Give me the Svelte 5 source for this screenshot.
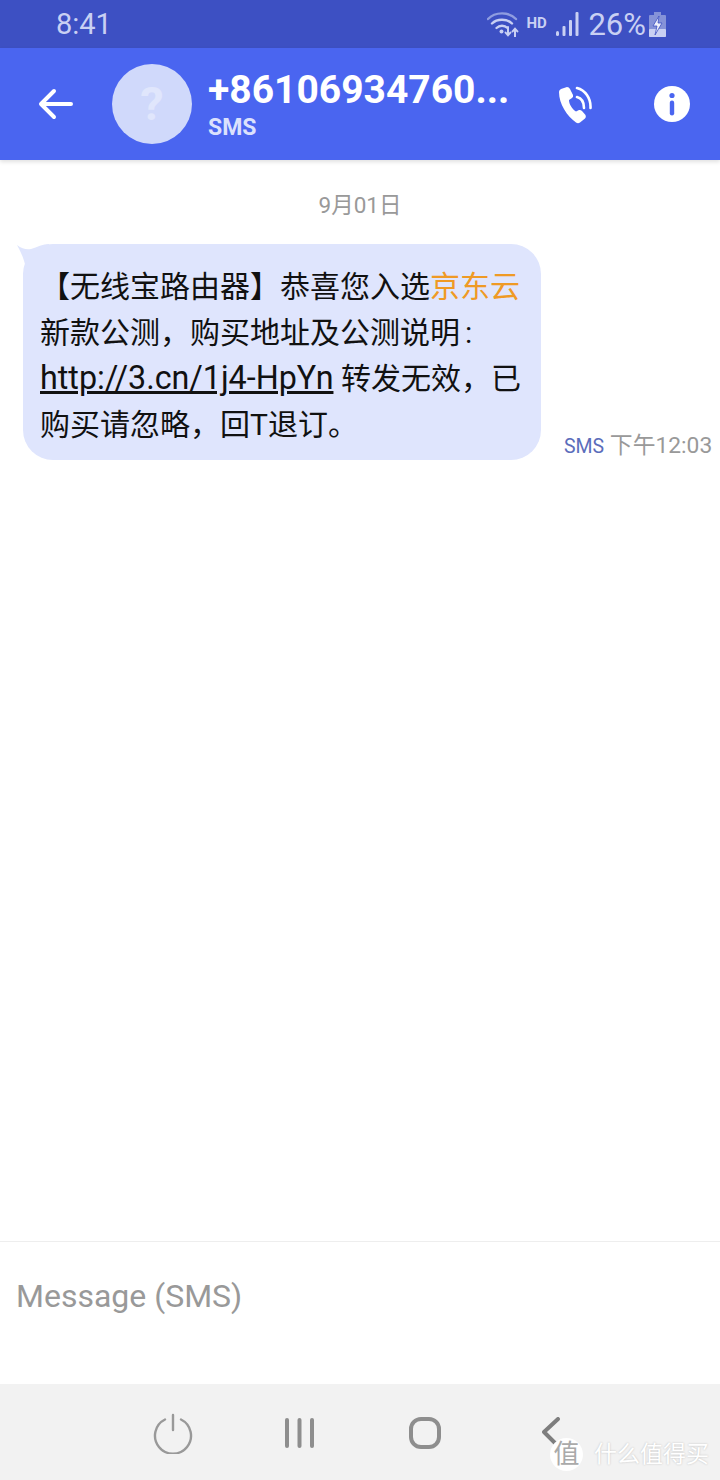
<script lang="ts">
  const words = "什么值得买";
</script>

<div class="phone">
  <div class="status">
    <span class="clock">8:41</span>
    <div class="status-right">
      <svg class="wifi" width="33" height="26" viewBox="0 0 33 26" fill="none" stroke-linecap="round">
        <path d="M1 8 C8 0.5 22 0.5 29 8" stroke="#8f9de0" stroke-width="2.4" />
        <path d="M5 12.5 C10 7.5 20 7.5 25 12.5" stroke="#c9d0f3" stroke-width="2.4" />
        <path d="M9.5 17 C12.5 14 17.5 14 20.5 17" stroke="#c9d0f3" stroke-width="2.4" />
        <circle cx="14.5" cy="20.5" r="2" fill="#c9d0f3" />
        <path d="M21 16 V24 M18.6 21.6 L21 24.2 L23.4 21.6" stroke="#c9d0f3" stroke-width="2" />
        <path d="M28 26 V18 M25.6 20.4 L28 17.8 L30.4 20.4" stroke="#c9d0f3" stroke-width="2" />
      </svg>
      <span class="hd">HD</span>
      <svg class="signal" width="23" height="24" viewBox="0 0 23 24" fill="#c9d0f3">
        <rect x="0" y="19" width="3" height="5" rx="1.5" />
        <rect x="6.5" y="14" width="3" height="10" rx="1" />
        <rect x="13" y="8" width="3" height="16" rx="1" />
        <rect x="19.5" y="0" width="3" height="24" rx="1" />
      </svg>
      <span class="pct">26%</span>
      <svg class="battery" width="17" height="25" viewBox="0 0 17 25">
        <rect x="5" y="0" width="7" height="3" fill="#8592d8" />
        <rect x="0" y="3" width="17" height="22" rx="1" fill="#8592d8" />
        <rect x="0" y="17" width="17" height="8" rx="1" fill="#c9d0f3" />
        <path d="M10 4 L4 14 H8 L6 23 L13 11 H9 Z" fill="#eef0fb" stroke="#3d50c3" stroke-width="0.8" />
      </svg>
    </div>
  </div>

  <header class="appbar">
    <svg class="back" width="36" height="32" viewBox="0 0 36 32" fill="none" stroke="#fff" stroke-width="4" stroke-linecap="round" stroke-linejoin="round">
      <path d="M33 16 H4 M16 3 L3 16 L16 29" />
    </svg>
    <div class="avatar">?</div>
    <div class="who">
      <div class="number">+86106934760...</div>
      <div class="kind">SMS</div>
    </div>
    <svg class="call" width="34" height="40" viewBox="0 0 34 40" fill="#fff">
      <path d="M3 5 L9 3 Q11 3 12 5 L15 11 Q15.5 13 14 14 L11 16 C11 20 14 25 18 27.5 L21 26 Q22.5 25.5 24 27 L27.5 31 Q28.5 33 27 34.5 L22 38.5 Q20 40 18 38.5 C9 32 1 20 1 8 Q1 6 3 5 Z" />
      <path d="M19 13 C23 14 26 18 26 24 M19 4 C27 6 33 14 32.5 24" fill="none" stroke="#fff" stroke-width="2.6" stroke-linecap="round" />
    </svg>
    <svg class="info" width="36" height="36" viewBox="0 0 36 36">
      <circle cx="18" cy="18" r="18" fill="#fff" />
      <circle cx="18" cy="9.5" r="2.6" fill="#4a65f0" />
      <rect x="15.8" y="14.5" width="4.4" height="15" rx="2.2" fill="#4a65f0" />
    </svg>
  </header>

  <main class="thread">
    <div class="date">9月01日</div>
    <div class="row">
      <div class="bubble">
        <svg class="tail" width="40" height="24" viewBox="0 0 40 24">
          <path d="M0 1 C5 5 10 6 14 5 C20 3 26 0 32 0 V24 H9 C7 15 4 8 0 1 Z" fill="#dfe5fd" />
        </svg>
        【无线宝路由器】恭喜您入选<span class="hl">京东云</span>新款公测，购买地址及公测说明<span class="colon">:</span>
        <a class="link" href="#msg">http://3.cn/1j4-HpYn</a> 转发无效，已购买请忽略，回T退订。
      </div>
      <div class="meta"><span class="via">SMS</span> 下午12:03</div>
    </div>
  </main>

  <div class="composer">Message (SMS)</div>

  <nav class="navbar">
    <svg width="40" height="42" viewBox="0 0 40 42" fill="none" stroke="#999" stroke-width="2.4" stroke-linecap="round">
      <path d="M12 7.5 A18 18 0 1 0 28 7.5 M20 3 V18" />
    </svg>
    <svg width="32" height="30" viewBox="0 0 32 30" fill="#8e8e8e">
      <rect x="2" y="0" width="4" height="30" rx="2" />
      <rect x="14.5" y="0" width="4" height="30" rx="2" />
      <rect x="27" y="0" width="4" height="30" rx="2" />
    </svg>
    <svg width="32" height="32" viewBox="0 0 32 32" fill="none" stroke="#8e8e8e" stroke-width="4">
      <rect x="2" y="2" width="28" height="28" rx="10" />
    </svg>
    <svg width="18" height="32" viewBox="0 0 18 32" fill="none" stroke="#7e7e7e" stroke-width="4" stroke-linecap="round" stroke-linejoin="round">
      <path d="M16 2 L2 15 L16 29" />
    </svg>
    <div class="watermark">
      <span class="seal">值</span>
      <span class="brand">{words}</span>
    </div>
  </nav>
</div>

<style>
  :global(body) {
    margin: 0;
    background: #fff;
  }

  .phone {
    width: 720px;
    height: 1480px;
    display: flex;
    flex-direction: column;
    font-family: Roboto, "Noto Sans CJK SC", sans-serif;
    overflow: hidden;
  }

  .status {
    height: 48px;
    flex: none;
    display: flex;
    align-items: center;
    justify-content: space-between;
    padding: 0 54px 0 56px;
    background: #3d50c3;
    color: #c9d0f3;
  }

  .clock {
    font-size: 29px;
  }

  .status-right {
    display: flex;
    align-items: center;
  }

  .wifi {
    margin-right: 6px;
  }

  .hd {
    font-size: 15px;
    font-weight: 700;
    width: 30px;
    margin-bottom: 2px;
  }

  .signal {
    margin-right: 9px;
  }

  .pct {
    font-size: 31px;
    margin-right: 3px;
  }

  .appbar {
    height: 112px;
    flex: none;
    display: flex;
    align-items: center;
    background: #4a65f0;
    box-shadow: 0 2px 4px rgba(0, 0, 0, 0.12);
    z-index: 1;
  }

  .back {
    margin-left: 38px;
    flex: none;
  }

  .avatar {
    width: 80px;
    height: 80px;
    margin-left: 38px;
    flex: none;
    border-radius: 50%;
    background: #d0d9fb;
    color: #e0e6fc;
    font-size: 47px;
    font-weight: 700;
    line-height: 80px;
    text-align: center;
  }

  .who {
    width: 350px;
    margin-left: 16px;
    flex: none;
  }

  .number {
    color: #fff;
    font-size: 39px;
    font-weight: 700;
    line-height: 46px;
    white-space: nowrap;
  }

  .kind {
    margin-top: 2px;
    color: #dbe1fd;
    font-size: 23px;
    font-weight: 700;
    line-height: 26px;
  }

  .call {
    flex: none;
  }

  .info {
    margin-left: 62px;
    flex: none;
  }

  .thread {
    flex: 1;
    padding-top: 30px;
  }

  .date {
    color: #999;
    font-size: 22.5px;
    line-height: 30px;
    text-align: center;
  }

  .row {
    display: flex;
    align-items: flex-end;
    margin-top: 24px;
    padding-left: 23px;
  }

  .bubble {
    position: relative;
    width: 484px;
    padding: 20px 17px 12px;
    border-radius: 30px;
    background: #dfe5fd;
    color: #111;
    font-size: 30px;
    line-height: 46px;
  }

  .tail {
    position: absolute;
    top: 0;
    left: -6px;
  }

  .hl {
    color: #ef9a25;
  }

  .colon {
    margin-left: 5px;
  }

  .link {
    color: #111;
    font-size: 32.3px;
    line-height: 1;
    text-decoration: underline;
  }

  .meta {
    margin-left: 23px;
    margin-bottom: -1px;
    color: #999;
    font-size: 22.8px;
    line-height: 28px;
    white-space: nowrap;
  }

  .via {
    color: #5b6dbb;
    font-size: 19.5px;
  }

  .composer {
    height: 108px;
    flex: none;
    display: flex;
    align-items: center;
    padding: 0 0 34px 16px;
    border-top: 1px solid #eee;
    color: #999;
    font-size: 32px;
  }

  .navbar {
    position: relative;
    height: 94px;
    flex: none;
    display: grid;
    grid-template-columns: repeat(4, 126px);
    justify-items: center;
    align-items: center;
    padding: 2px 0 0 110px;
    background: #f2f2f2;
  }

  .watermark {
    position: absolute;
    left: 550px;
    top: 54px;
    display: flex;
    align-items: center;
    gap: 11px;
  }

  .seal {
    width: 33px;
    height: 33px;
    border-radius: 50%;
    background: #fff;
    color: #aaa;
    font-size: 26px;
    line-height: 33px;
    text-align: center;
  }

  .brand {
    color: #fff;
    font-size: 23px;
    line-height: 33px;
    text-shadow: 0 0 2px #bbb;
  }
</style>
